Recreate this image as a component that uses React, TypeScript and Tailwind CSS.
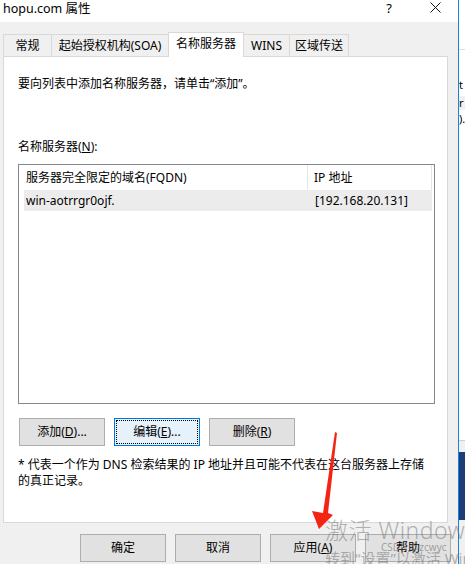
import React from "react";

const tabs = [
  { label: "常规", w: "w-[49px]" },
  { label: "起始授权机构(SOA)", w: "w-[118px]" },
  { label: "名称服务器", w: "w-[76px]", active: true },
  { label: "WINS", w: "w-[47px]" },
  { label: "区域传送", w: "w-[60px]" },
];

function Btn({
  children,
  focused,
}: {
  children: React.ReactNode;
  focused?: boolean;
}) {
  if (focused) {
    return (
      <div className="w-[86px] h-[28px] border border-[#0078d7] bg-[#e5f1fb] p-[1px]">
        <div className="w-full h-full border border-dotted border-black flex items-center justify-center">
          {children}
        </div>
      </div>
    );
  }
  return (
    <div className="w-[86px] h-[28px] border border-[#adadad] bg-[#e1e1e1] flex items-center justify-center">
      {children}
    </div>
  );
}

export default function App() {
  return (
    <div className="relative w-[465px] h-[564px] overflow-hidden flex bg-white text-black text-[12px] font-['Noto_Sans','Noto_Sans_CJK_SC',sans-serif]">
      {/* dialog window */}
      <div className="w-[458px] shrink-0 flex flex-col bg-[#f0f0f0]">
        {/* title bar */}
        <div className="h-[22px] bg-white flex items-center pl-[3px] relative">
          <span className="text-[12.5px] leading-[16px] -mt-[4px]">hopu.com 属性</span>
          <span className="ml-auto mr-[38px] -mt-[6px] text-[13px] leading-[16px]">?</span>
          <svg className="mr-[17px] -mt-[8px]" width="11" height="11" viewBox="0 0 11 11">
            <path d="M0.5 0.5 L10.5 10.5 M10.5 0.5 L0.5 10.5" stroke="#111" strokeWidth="1" />
          </svg>
        </div>

        {/* tabs */}
        <div className="mt-[10px] pl-[3px] h-[24px] flex items-end relative z-10">
          {tabs.map((t) =>
            t.active ? (
              <div
                key={t.label}
                className={`${t.w} -ml-px h-[25px] mb-[-1px] bg-white border border-b-0 border-[#d9d9d9] flex items-center justify-center pb-[3px]`}
              >
                {t.label}
              </div>
            ) : (
              <div
                key={t.label}
                className={`${t.w} -ml-px first:ml-0 h-[22px] bg-[#f0f0f0] border border-b-0 border-[#d9d9d9] flex items-center justify-center`}
              >
                {t.label}
              </div>
            )
          )}
        </div>

        {/* tab panel */}
        <div className="ml-[3px] w-[445px] h-[467px] border border-[#d9d9d9] bg-white pl-[14px] pt-[19px]">
          <div className="leading-[16px]">要向列表中添加名称服务器，请单击“添加”。</div>
          <div className="leading-[16px] mt-[47px]">
            名称服务器(<span className="underline">N</span>):
          </div>

          {/* list view */}
          <div className="mt-[9px] w-[417px] h-[240px] border border-[#828790]">
            <div className="h-[25px] flex items-center">
              <div className="w-[289px] h-full border-r border-[#e5e5e5] pl-[7px] flex items-center">
                服务器完全限定的域名(FQDN)
              </div>
              <div className="w-[124px] h-full border-r border-[#e5e5e5] pl-[6px] flex items-center">
                IP 地址
              </div>
            </div>
            <div className="ml-[5px] w-[408px] h-[21px] bg-[#ececec] flex items-center">
              <div className="w-[284px] pl-[2px]">win-aotrrgr0ojf.</div>
              <div className="pl-[7px]">[192.168.20.131]</div>
            </div>
          </div>

          {/* action buttons */}
          <div className="mt-[14px] ml-[1px] flex gap-[9px]">
            <Btn>
              添加(<span className="underline">D</span>)...
            </Btn>
            <Btn focused>
              编辑(<span className="underline">E</span>)...
            </Btn>
            <Btn>
              删除(<span className="underline">R</span>)
            </Btn>
          </div>

          <div className="mt-[11px] leading-[16px]">
            * 代表一个作为 DNS 检索结果的 IP 地址并且可能不代表在这台服务器上存储
            <br />
            的真正记录。
          </div>
        </div>

        {/* dialog buttons */}
        <div className="mt-[11px] pr-[7px] flex justify-end gap-[9px]">
          <Btn>确定</Btn>
          <Btn>取消</Btn>
          <Btn>
            应用(<span className="underline">A</span>)
          </Btn>
          <Btn>帮助</Btn>
        </div>
      </div>

      {/* window edge + what lies behind */}
      <div className="w-px shrink-0 bg-[#1883d7]" />
      <div className="flex-1 flex flex-col text-[11px] leading-[14px]">
        <div className="h-[50px] bg-white border-b border-[#dcdcdc]" />
        <div className="mt-[28px]">t</div>
        <div className="mt-[4px] bg-[#f0f0f0]">r</div>
        <div className="mt-[2px]">).</div>
        <div className="flex-1 bg-white" />
        <div className="h-[12px] bg-[#f0f0f0] border-t border-[#d0d0d0]" />
        <div className="h-[68px] bg-[#1c3d78]" />
        <div className="h-[44px] bg-[#f0f0f0]" />
      </div>

      {/* red arrow annotation */}
      <svg className="absolute left-0 top-0 pointer-events-none" width="465" height="564">
        <polygon
          points="335,432 337,433 328,513 333,515 319,529 312,511 323,513"
          fill="#f42414"
        />
      </svg>

      {/* activation watermark */}
      <div className="absolute left-[325px] top-[515px] pointer-events-none text-[rgba(110,110,110,0.5)] whitespace-nowrap">
        <div className="text-[23px] leading-[30px] font-light tracking-[0.5px]">激活 Windows</div>
        <div className="text-[15px] leading-[18px] mt-[4px]">转到“设置”以激活 Windows。</div>
      </div>
      <div className="absolute left-[381px] top-[541px] text-[10px] leading-[12px] text-[rgba(110,110,110,0.6)] pointer-events-none whitespace-nowrap">
        CSDN @zcwyc
      </div>
    </div>
  );
}
